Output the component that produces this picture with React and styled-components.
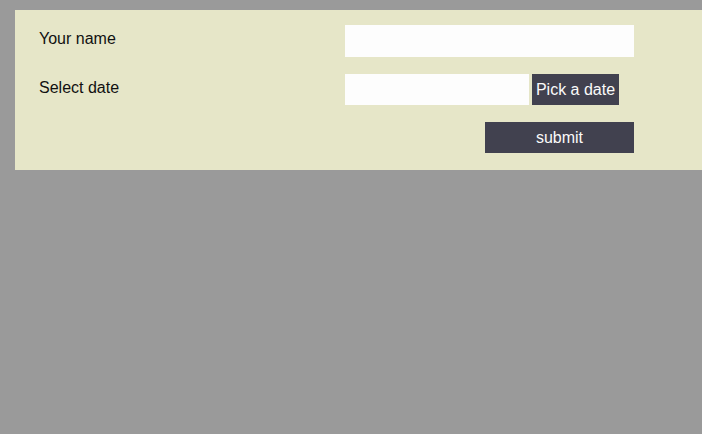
import React from 'react'
import styled, { createGlobalStyle } from 'styled-components'

const GlobalStyle = createGlobalStyle`
    html, body {
        margin: 0;
        padding: 0;
        background-color: #9a9a9a;
        font-family: "Liberation Sans", Arial, sans-serif;
        overflow: hidden;
    }
`;

export default function App() {
    return (
        <React.Fragment>
            <GlobalStyle />
            <FormPanel onSubmit={(e) => e.preventDefault()}>
                <FormRow>
                    <FieldLabel>Your name</FieldLabel>
                    <TextInput type="text" $width={289} $height={32} />
                </FormRow>
                <FormRow>
                    <FieldLabel>Select date</FieldLabel>
                    <DateGroup>
                        <TextInput type="text" $width={184} $height={31} />
                        <PickButton type="button">Pick a date</PickButton>
                    </DateGroup>
                </FormRow>
                <SubmitRow>
                    <SubmitButton type="submit">submit</SubmitButton>
                </SubmitRow>
            </FormPanel>
        </React.Fragment>
    )
}

// styled components
const FormPanel = styled.form`
    display: flex;
    flex-flow: column nowrap;
    gap: 17px;
    width: calc(100% - 15px);
    margin: 10px 0px 0px 15px;
    padding: 15px 0px 17px 24px;
    box-sizing: border-box;
    background-color: #e6e6c8;
`;

const FormRow = styled.div`
    display: flex;
    flex-flow: row nowrap;
    align-items: flex-start;
`;

const FieldLabel = styled.label`
    display: block;
    width: 306px;
    padding: 5px 0px 0px;
    font-size: 16px;
    color: #111;
`;

const TextInput = styled.input`
    display: block;
    width: ${({ $width }) => $width}px;
    height: ${({ $height }) => $height}px;
    margin: 0;
    padding: 0px 6px;
    box-sizing: border-box;
    border: none;
    outline: none;
    background-color: #fdfdfd;
    font-family: inherit;
    font-size: 16px;
`;

const DateGroup = styled.div`
    display: flex;
    flex-flow: row nowrap;
    gap: 3px;
`;

const DarkButton = styled.button`
    display: block;
    height: 31px;
    margin: 0;
    border: none;
    background-color: #41414f;
    color: #fafafa;
    font-family: inherit;
    font-size: 16px;
    white-space: nowrap;
    cursor: pointer;
`;

const PickButton = styled(DarkButton)`
    width: 87px;
    padding: 0;
`;

const SubmitRow = styled.div`
    display: flex;
    width: 595px;
    justify-content: flex-end;
`;

const SubmitButton = styled(DarkButton)`
    width: 149px;
    padding: 0;
`;
